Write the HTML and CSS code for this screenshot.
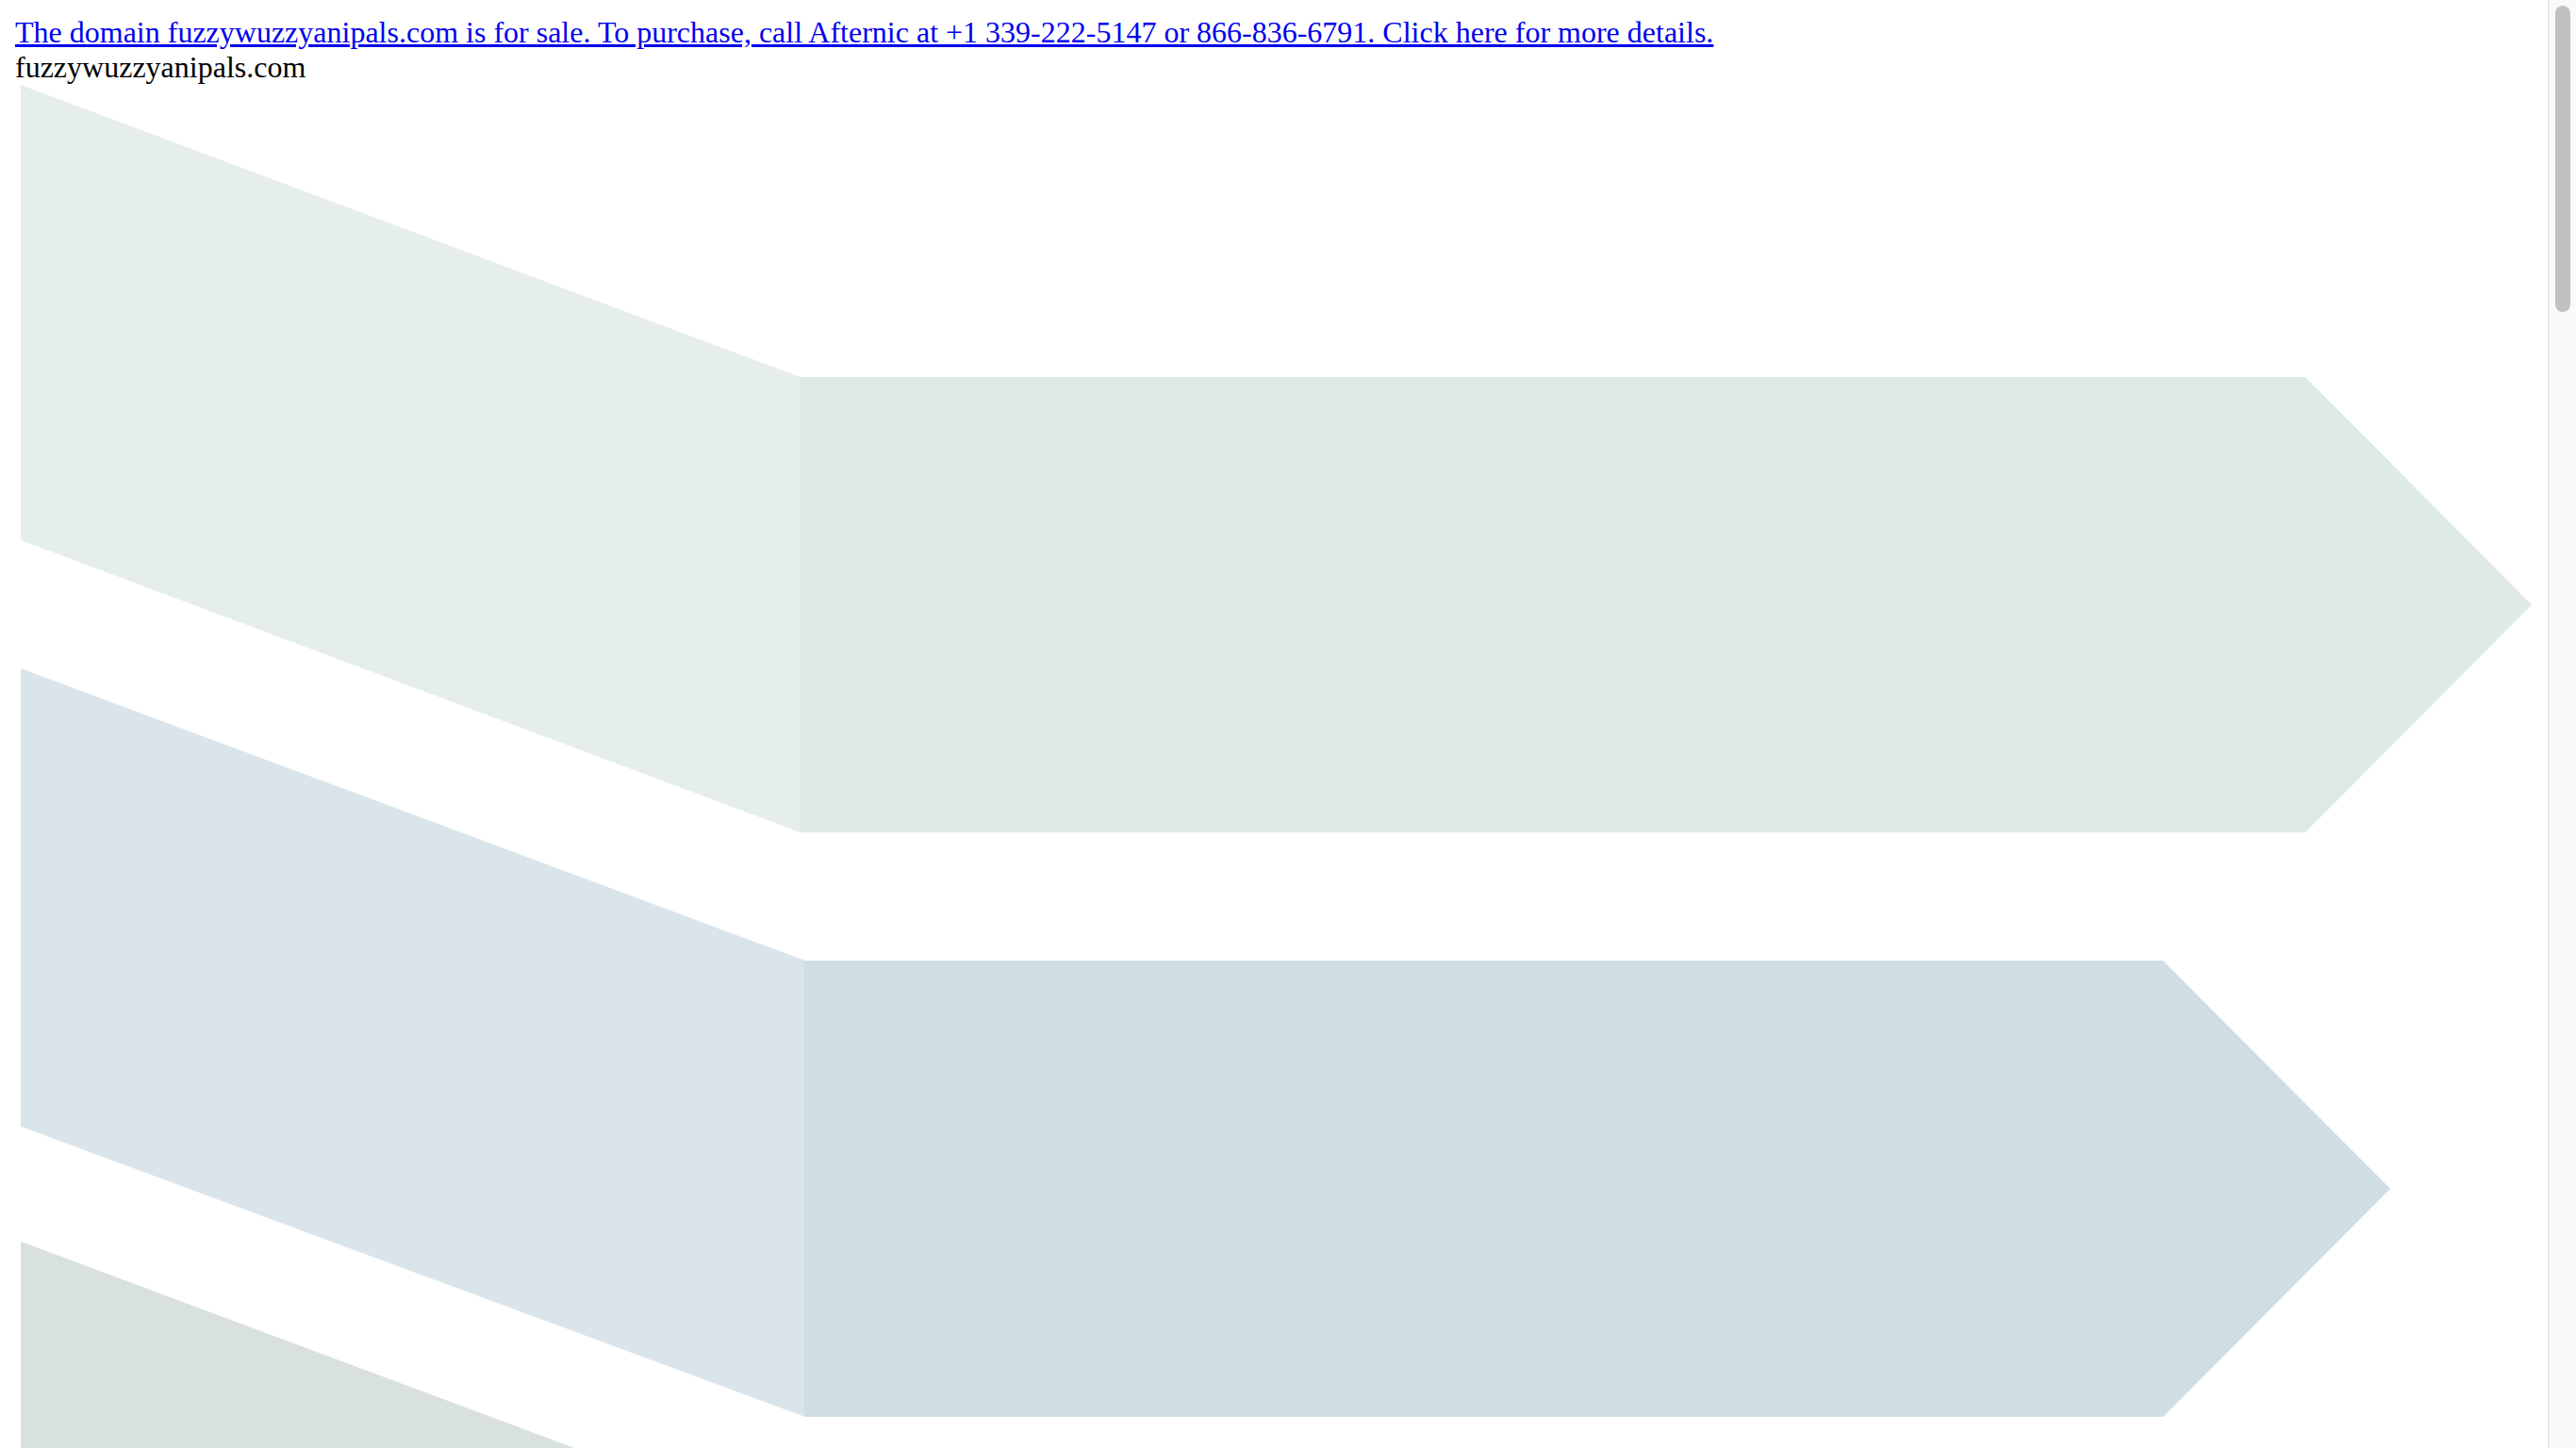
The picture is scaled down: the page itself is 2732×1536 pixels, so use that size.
FILE: index.html
```html
<!DOCTYPE html>
<html lang="en">
<head>
<meta charset="utf-8">
<title>fuzzywuzzyanipals.com</title>
<link rel="stylesheet" href="styles.css">
</head>
<body>
<a class="sale-link" href="#">The domain fuzzywuzzyanipals.com is for sale. To purchase, call Afternic at +1 339-222-5147 or 866-836-6791. Click here for more details.</a>
<div class="domain-name">fuzzywuzzyanipals.com</div>
<svg class="arrows" width="2670" height="6894" viewBox="0 0 2670 6894" xmlns="http://www.w3.org/2000/svg">
  <polygon class="s1a" points="6,0 833,310 833,793 6,483"/>
  <polygon class="s1b" points="832,310 2429,310 2669,551.5 2429,793 832,793"/>
  <polygon class="s2a" points="6,619 838,929 838,1413 6,1105"/>
  <polygon class="s2b" points="837,929 2278,929 2519,1171 2278,1413 837,1413"/>
  <polygon class="s3a" points="6,1227 837,1537 837,2020 6,1710"/>
  <polygon class="s3b" points="837,1537 2150,1537 2391,1778 2150,2020 837,2020"/>
</svg>
<div class="scrollbar" aria-hidden="true"><div class="scrollbar-thumb"></div></div>
</body>
</html>
```

FILE: styles.css
```css
html {
  background: #ffffff;
}

body {
  margin: 16px;
  font-family: "Liberation Serif", "Times New Roman", serif;
  font-size: 32px;
  line-height: normal;
  color: #000000;
}

.sale-link {
  color: #0000ee;
  text-decoration: underline;
}

.domain-name {
  color: #000000;
}

.arrows {
  display: block;
}

.s1a { fill: #e5eeed; }
.s1b { fill: #dfeae8; }
.s2a { fill: #dae5eb; }
.s2b { fill: #cedee4; }
.s3a { fill: #d9e0e0; }
.s3b { fill: #d3dcdc; }

.scrollbar {
  position: fixed;
  top: 0;
  right: 0;
  bottom: 0;
  width: 30px;
  box-sizing: border-box;
  background: #fafafa;
  border-left: 2px solid #e8e8e8;
  padding: 6px 6px 0 6px;
}

.scrollbar-thumb {
  width: 16px;
  height: 325px;
  border-radius: 8px;
  background: #c1c1c1;
}
```
